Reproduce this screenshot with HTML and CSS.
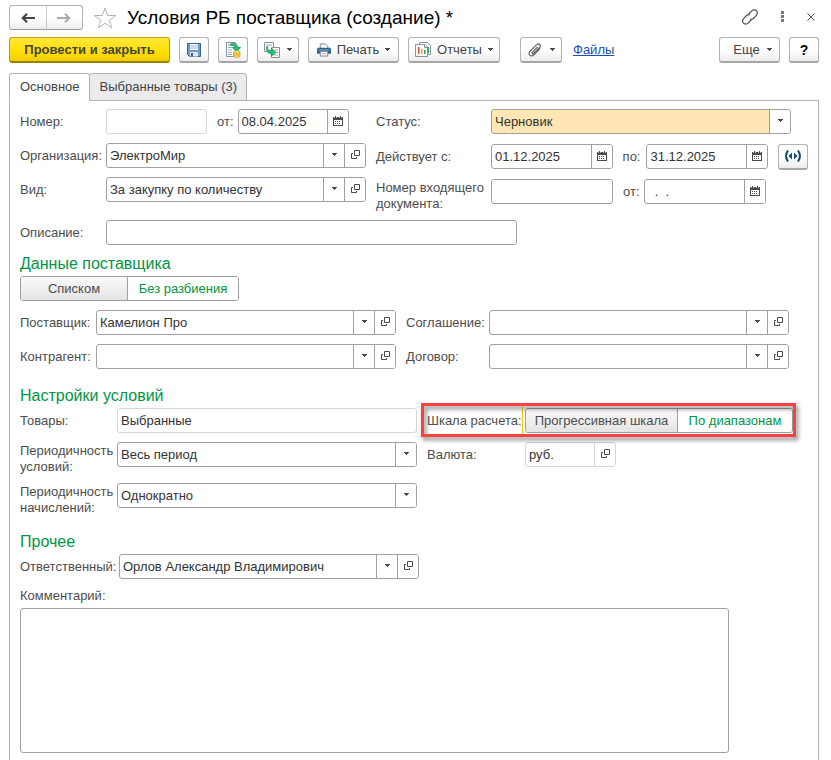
FILE: index.html
```html
<!DOCTYPE html>
<html lang="ru">
<head>
<meta charset="utf-8">
<title>Условия РБ поставщика (создание) *</title>
<link rel="stylesheet" href="styles.css">
</head>
<body>
<svg class="defs" aria-hidden="true">
  <symbol id="cal" viewBox="0 0 10 10"><path d="M0 1h10v9H0z" fill="#4a4a4a"/><path d="M1 4h8v5H1z" fill="#fff"/><path d="M2 0h1v2H2zM7 0h1v2H7z" fill="#4a4a4a"/><path d="M1 1h1v1H1zM3 1h1v1H3zM6 1h1v1H6zM8 1h1v1H8z" fill="#bbb"/><path d="M2 5h1v1H2zM4 5h1v1H4zM6 5h1v1H6zM2 7h1v1H2zM4 7h1v1H4zM6 7h1v1H6z" fill="#4a4a4a"/></symbol>
  <symbol id="open" viewBox="0 0 9 9"><path d="M3.500 .5h5v5h-5zM2 3.500H.5v5h5V7" fill="none" stroke="#4a4a4a"/></symbol>
  <symbol id="arr" viewBox="0 0 5 3"><path d="M0 0h5v1H4v1H3v1H2V2H1V1H0z" fill="#4a4a4a"/></symbol>
</svg>

<header class="titlebar">
  <div class="nav">
    <button type="button" aria-label="Назад"><svg width="14" height="10" viewBox="0 0 14 10"><path d="M14 5H2M6 .8L1.800 5 6 9.200" fill="none" stroke="#444" stroke-width="2.200"/></svg></button>
    <button type="button" aria-label="Вперед"><svg width="14" height="10" viewBox="0 0 14 10"><path d="M0 5h12M8 .8L12.200 5 8 9.200" fill="none" stroke="#aaa" stroke-width="2"/></svg></button>
  </div>
  <button type="button" class="plain star" aria-label="В избранное"><svg width="24" height="22" viewBox="0 0 24 22"><path d="M12 1l2.700 7.500h8l-6.400 4.800 2.400 7.600L12 16.300l-6.700 4.600 2.400-7.600L1.300 8.500h8z" fill="#fff" stroke="#b0b5ba"/></svg></button>
  <h1>Условия РБ поставщика (создание) *</h1>
  <div class="window-tools">
    <button type="button" class="plain" aria-label="Ссылка"><svg width="16" height="16" viewBox="0 0 16 16"><g fill="none" stroke="#555" stroke-width="1.200"><path d="M6.500 5.500l3.300-3.700a3.200 3.200 0 0 1 4.600 4.500l-3 3.200c-1 1-2.300 1-3.200.4"/><path d="M9.500 10.500l-3.300 3.700a3.200 3.200 0 0 1-4.600-4.500l3-3.200c1-1 2.300-1 3.200-.4"/></g></svg></button>
    <button type="button" class="plain" aria-label="Меню"><svg width="3" height="11" viewBox="0 0 3 11"><path d="M0 0h3v3H0zM0 4h3v3H0zM0 8h3v3H0z" fill="#777"/></svg></button>
    <button type="button" class="plain" aria-label="Закрыть"><svg width="8" height="8" viewBox="0 0 8 8"><path d="M.5.500l7 7M7.500.500l-7 7" stroke="#555"/></svg></button>
  </div>
</header>

<div class="toolbar">
  <button type="button" class="btn primary">Провести и закрыть</button>
  <button type="button" class="btn square" aria-label="Записать"><svg width="14" height="14" viewBox="0 0 14 14"><path d="M.5.500h13v13h-11l-2-2z" fill="#6f9bcb" stroke="#3b618c"/><path d="M3 1h8v6H3z" fill="#fff"/><path d="M3 3h8M3 5h8" stroke="#9fb6cf"/><path d="M3 9h8v4.500H3z" fill="#dce6f0"/><path d="M4 10h2v3.500H4z" fill="#3b618c"/></svg></button>
  <button type="button" class="btn square" aria-label="Провести"><svg width="16" height="16" viewBox="0 0 16 16"><path d="M1.500.500h9v14h-9z" fill="#fff" stroke="#8494a5"/><path d="M3 3h3M3 5.500h4M3 8h4M3 10.500h4M3 12.500h4" stroke="#9aa8b5"/><path d="M5.500 2c4-1.500 7 .3 7.500 3.500h2.500L11.500 10l-4-4.500h2.300C9.300 3.800 8 3 5.500 3.400z" fill="#25c16c" stroke="#149150" stroke-width=".8"/><path d="M8.500 10v4c0 2 6.500 2 6.500 0v-4" fill="#f5d552" stroke="#c9a01f" stroke-width=".7"/><ellipse cx="11.750" cy="10" rx="3.250" ry="1.200" fill="#ffe98a" stroke="#c9a01f" stroke-width=".7"/><path d="M8.500 12c0 1.500 6.500 1.500 6.500 0" fill="none" stroke="#c9a01f" stroke-width=".7"/></svg></button>
  <button type="button" class="btn drop create" aria-label="Создать на основании"><svg width="17" height="16" viewBox="0 0 17 16"><path d="M.5.500h9v9h-9z" fill="#fff" stroke="#8494a5"/><path d="M2 3h6M2 5h3" stroke="#9aa8b5"/><path d="M7.500 5.500h8v10h-8z" fill="#fff" stroke="#8494a5"/><path d="M11 8h3M12 10.500h2M10 13h4" stroke="#9aa8b5"/><path d="M3 4.500c0 3 1.500 4 4.500 4V6l4.500 4.500L7.500 14v-2.500C3.500 11.500 2 9 3 4.500z" fill="#25c16c" stroke="#149150" stroke-width=".8"/></svg><svg class="arr"><use href="#arr"/></svg></button>
  <button type="button" class="btn drop print"><svg width="14" height="14" viewBox="0 0 15 14"><path d="M3.500 5V.500h5.500l2.500 2.500v2" fill="#fff" stroke="#6d8296"/><path d="M1 4.500h13l1 1.500v5H0V6z" fill="#2f5e88"/><path d="M1.500 7h12" stroke="#9fb9d0"/><path d="M3.500 8.500h8v5h-8z" fill="#fff" stroke="#6d8296"/><path d="M5 11h5" stroke="#9aa8b5"/></svg><span>Печать</span><svg class="arr"><use href="#arr"/></svg></button>
  <button type="button" class="btn drop reports"><svg width="16" height="16" viewBox="0 0 16 16"><path d="M4.500 3V.500h8l3 3v9h-3" fill="#fff" stroke="#8494a5"/><path d="M13.500 5v6" stroke="#2fa45f"/><path d="M.5 2.500h9.500l2.500 2.500v9.500H.5z" fill="#fff" stroke="#8494a5"/><path d="M9.500 2.500v3h3" fill="none" stroke="#8494a5"/><path d="M3 5h1.500v7H3z" fill="#e6472e"/><path d="M6 7h1.500v5H6z" fill="#f0a62a"/><path d="M9 8h1.500v4H9z" fill="#28a35a"/></svg><span>Отчеты</span><svg class="arr"><use href="#arr"/></svg></button>
  <button type="button" class="btn drop clip" aria-label="Присоединенные файлы"><svg width="14" height="14" viewBox="0 0 14 14"><path d="M9.500 4L4.300 9.300c-.8 1 .4 2 1.300 1.200l6-6c2-2.200-.8-4.800-2.900-2.900L2.300 8C-.7 11.200 2.700 14.600 5.900 11.800L12 5.500" fill="none" stroke="#666" stroke-width="1.200"/></svg><svg class="arr"><use href="#arr"/></svg></button>
  <a class="files" href="#files">Файлы</a>
  <button type="button" class="btn drop more"><span>Еще</span><svg class="arr"><use href="#arr"/></svg></button>
  <button type="button" class="btn square help" aria-label="Справка">?</button>
</div>

<nav class="tabs">
  <a class="tab active" href="#main">Основное</a>
  <a class="tab" href="#goods">Выбранные товары (3)</a>
</nav>

<main class="panel" id="main">
  <div class="columns general">
    <div class="column">
      <div class="row"><label for="num">Номер:</label><div class="field short muted"><input id="num" readonly></div><label class="inline" for="date">от:</label><div class="field date1"><input id="date" value="08.04.2025"><button type="button" aria-label="Календарь"><svg class="cal"><use href="#cal"/></svg></button></div></div>
      <div class="row"><label for="org">Организация:</label><div class="field grow combo"><select id="org"><option>ЭлектроМир</option></select><span class="cell"><svg class="arr"><use href="#arr"/></svg></span><button type="button" aria-label="Открыть"><svg class="open"><use href="#open"/></svg></button></div></div>
      <div class="row"><label for="kind">Вид:</label><div class="field grow combo"><select id="kind"><option>За закупку по количеству</option></select><span class="cell"><svg class="arr"><use href="#arr"/></svg></span><button type="button" aria-label="Открыть"><svg class="open"><use href="#open"/></svg></button></div></div>
    </div>
    <div class="column right">
      <div class="row"><label for="status">Статус:</label><div class="field status combo"><select id="status"><option>Черновик</option></select><span class="cell"><svg class="arr"><use href="#arr"/></svg></span></div></div>
      <div class="row"><label for="from">Действует с:</label><div class="field date"><input id="from" value="01.12.2025"><button type="button" aria-label="Календарь"><svg class="cal"><use href="#cal"/></svg></button></div><label class="inline until" for="to">по:</label><div class="field date"><input id="to" value="31.12.2025"><button type="button" aria-label="Календарь"><svg class="cal"><use href="#cal"/></svg></button></div><button type="button" class="btn square period" aria-label="Выбрать период"><svg width="16" height="12" viewBox="0 0 16 12"><path d="M3 .5C.5 4 .5 8 3 11.500M13 .5c2.500 3.500 2.500 7.500 0 11" fill="none" stroke="#164a6e" stroke-width="2"/><path d="M7 2.500v7L3.500 6zM9 2.500v7L12.500 6z" fill="#164a6e"/></svg></button></div>
      <div class="row tall"><label for="innum">Номер входящего документа:</label><div class="field date"><input id="innum"></div><label class="inline" for="indate">от:</label><div class="field date"><input id="indate" value="&nbsp; .&nbsp; ."><button type="button" aria-label="Календарь"><svg class="cal"><use href="#cal"/></svg></button></div></div>
    </div>
  </div>
  <div class="row general-row"><label for="desc">Описание:</label><div class="field desc"><input id="desc"></div></div>

  <h2>Данные поставщика</h2>
  <div class="segment view"><button type="button">Списком</button><button type="button" class="on">Без разбиения</button></div>
  <div class="columns supplier">
    <div class="column">
      <div class="row"><label for="sup">Поставщик:</label><div class="field grow combo"><select id="sup"><option>Камелион Про</option></select><span class="cell"><svg class="arr"><use href="#arr"/></svg></span><button type="button" aria-label="Открыть"><svg class="open"><use href="#open"/></svg></button></div></div>
      <div class="row"><label for="contr">Контрагент:</label><div class="field grow combo"><select id="contr"><option></option></select><span class="cell"><svg class="arr"><use href="#arr"/></svg></span><button type="button" aria-label="Открыть"><svg class="open"><use href="#open"/></svg></button></div></div>
    </div>
    <div class="column right">
      <div class="row"><label for="agr">Соглашение:</label><div class="field grow combo"><select id="agr"><option></option></select><span class="cell"><svg class="arr"><use href="#arr"/></svg></span><button type="button" aria-label="Открыть"><svg class="open"><use href="#open"/></svg></button></div></div>
      <div class="row"><label for="dog">Договор:</label><div class="field grow combo"><select id="dog"><option></option></select><span class="cell"><svg class="arr"><use href="#arr"/></svg></span><button type="button" aria-label="Открыть"><svg class="open"><use href="#open"/></svg></button></div></div>
    </div>
  </div>

  <h2>Настройки условий</h2>
  <div class="columns terms">
    <div class="column">
      <div class="row"><label for="goods">Товары:</label><div class="field grow muted"><input id="goods" value="Выбранные" readonly></div></div>
      <div class="row tall"><label for="per1">Периодичность условий:</label><div class="field grow combo"><select id="per1"><option>Весь период</option></select><span class="cell"><svg class="arr"><use href="#arr"/></svg></span></div></div>
      <div class="row tall"><label for="per2">Периодичность начислений:</label><div class="field grow combo"><select id="per2"><option>Однократно</option></select><span class="cell"><svg class="arr"><use href="#arr"/></svg></span></div></div>
    </div>
    <div class="column right">
      <div class="row marked"><span class="label" id="scale">Шкала расчета:</span><div class="segment scale" role="group" aria-labelledby="scale"><button type="button">Прогрессивная шкала</button><button type="button" class="on">По диапазонам</button></div><span class="mark"></span></div>
      <div class="row"><label for="cur">Валюта:</label><div class="field currency muted"><input id="cur" value="руб." readonly><button type="button" aria-label="Открыть"><svg class="open"><use href="#open"/></svg></button></div></div>
    </div>
  </div>

  <h2>Прочее</h2>
  <div class="row other"><label for="resp">Ответственный:</label><div class="field person combo"><select id="resp"><option>Орлов Александр Владимирович</option></select><span class="cell"><svg class="arr"><use href="#arr"/></svg></span><button type="button" aria-label="Открыть"><svg class="open"><use href="#open"/></svg></button></div></div>
  <label class="comment-label" for="comment">Комментарий:</label>
  <textarea id="comment"></textarea>
</main>
</body>
</html>
```
FILE: styles.css
```css
* { box-sizing: border-box; }
body {
  margin: 0;
  padding: 5px 12px 0 9px;
  min-height: 100vh;
  display: flex;
  flex-direction: column;
  background: #fff;
  color: #4d4d4d;
  font: 13px/16px "Liberation Sans", Arial, sans-serif;
}
button, input, select, textarea { font: inherit; color: inherit; margin: 0; }
button { padding: 0; cursor: pointer; }
svg { display: block; flex: none; }
.defs { position: absolute; width: 0; height: 0; }
.arr { width: 5px; height: 3px; }
.cal { width: 10px; height: 10px; }
.open { width: 9px; height: 9px; }

.titlebar { display: flex; align-items: center; height: 25px; }
.nav {
  display: flex;
  width: 74px;
  height: 25px;
  border: 1px solid #b3b3b3;
  border-bottom-color: #999;
  border-radius: 3px;
  background: linear-gradient(#fff 50%, #eee);
}
.nav button { flex: 1; display: grid; place-items: center; border: 0; background: none; }
.nav button + button { border-left: 1px solid #ccc; }
.plain { border: 0; background: none; }
.star { margin: 0 10px; }
h1 { margin: 0; font-size: 19px; line-height: 24px; font-weight: 400; color: #000; white-space: nowrap; }
.window-tools { display: flex; align-items: center; gap: 23px; margin-left: auto; padding: 0 4px 2px 0; }

.toolbar { display: flex; align-items: center; gap: 9px; margin-top: 7px; }
.btn {
  display: flex;
  align-items: center;
  justify-content: center;
  height: 26px;
  border: 1px solid #b3b3b3;
  border-bottom: 2px solid #a6a6a6;
  border-radius: 3px;
  background: linear-gradient(#fff 50%, #ededed);
  color: #444;
  white-space: nowrap;
}
.btn.primary {
  width: 161px;
  border-color: #c3a200 #b89900 #9c8200;
  background: linear-gradient(#ffe83c, #ffde00 60%, #f0cf00);
  font-weight: 700;
}
.btn.square { width: 30px; }
.btn.drop { gap: 6px; }
.btn.create, .btn.clip { width: 42px; }
.btn.print { width: 91px; }
.btn.reports { width: 92px; }
.btn.clip { margin-left: 11px; gap: 8px; }
.btn.more { margin-left: auto; width: 61px; padding-left: 6px; gap: 7px; }
.btn.help { color: #000; font-size: 14px; font-weight: 700; }
.files { margin-left: 2px; color: #1a4fb4; }

.tabs { display: flex; margin-top: 10px; height: 28px; position: relative; z-index: 1; }
.tab {
  padding: 5px 9px 5px 10px;
  border: 1px solid #b3b3b3;
  border-radius: 3px 3px 0 0;
  margin-left: -1px;
  background: #ebebeb;
  color: #444;
  text-decoration: none;
}
.tab.active { margin-left: 0; background: #fff; border-bottom-color: #fff; }

.panel { flex: 1; margin-top: -1px; border: 1px solid #b3b3b3; border-bottom: 0; padding: 8px 10px 7px; }
.columns { display: grid; gap: 10px; }
.column { display: flex; flex-direction: column; gap: 9px; min-width: 0; }
.general { grid-template-columns: 346fr 432fr; }
.general .right { gap: 10px; }
.supplier { grid-template-columns: 376fr 383fr; margin: 9px 19px 0 0; }
.terms { grid-template-columns: 397fr 381fr; }

.row { display: flex; align-items: center; height: 25px; }
.row.tall { height: 32px; align-items: flex-start; }
.row > label, .row > .label { flex: none; }
.tall > label { padding-top: 1px; }
.general label, .general-row label { width: 86px; }
.general .right label { width: 115px; }
.supplier label { width: 76px; }
.supplier .right label { width: 83px; }
.terms label { width: 97px; }
.terms .right label, .terms .label { width: 98px; }
.other label { width: 99px; }
.general .row .inline, .general .right .row .inline { width: auto; margin: 0 4px 0 10px; }
.general .right .row .until { margin-right: 6px; }
.tall .inline { line-height: 24px; }

.field {
  display: flex;
  height: 25px;
  border: 1px solid #a0a0a0;
  border-radius: 3px;
  background: #fff;
  color: #333;
  overflow: hidden;
}
.field input, .field select {
  flex: 1;
  width: 100%;
  min-width: 0;
  border: 0;
  padding: 0 3px;
  background: none;
  appearance: none;
  outline: 0;
}
.field button, .cell {
  flex: none;
  width: 21px;
  display: grid;
  place-items: center;
  padding-bottom: 2px;
  border: 0;
  border-left: 1px solid #a0a0a0;
  background: #fff;
}
.combo { display: grid; grid-template-columns: 1fr 21px auto; }
.combo select { grid-area: 1 / 1 / 2 / 3; }
.cell { grid-area: 1 / 2; pointer-events: none; }
.field.muted, .muted button { border-color: #d6d6d6; }
.grow { flex: 1; min-width: 0; }
.short { width: 101px; }
.date1 { width: 111px; }
.date { width: 122px; }
.status { width: 300px; background: #ffe6b3; }
.desc { width: 411px; }
.currency { width: 91px; }
.person { width: 300px; }
.period { margin-left: 10px; }
.general-row { margin-top: 9px; }

h2 { margin: 8px 0 1px; font-size: 16px; line-height: 22px; font-weight: 400; color: #009646; }
.columns + h2 { margin-top: 16px; }

.segment {
  display: inline-flex;
  height: 25px;
  border: 1px solid #a0a0a0;
  border-radius: 3px;
  overflow: hidden;
  vertical-align: top;
}
.segment button { border: 0; background: linear-gradient(#fafafa, #e4e4e4); }
.segment .on { border-left: 1px solid #a0a0a0; background: #fff; color: #009646; }
.view { display: flex; width: 219px; }
.view button { flex: 1 1 106px; }
.view .on { flex-basis: 111px; }
.scale button { width: 151px; }
.scale .on { width: 115px; }

.marked { position: relative; width: 366px; }
.marked .label { height: 28px; line-height: 28px; width: 96px; margin-right: 2px; border-right: 1px solid #f2c200; }
.mark {
  position: absolute;
  inset: -5px -3px -4px -6px;
  border: 3px solid #fb4040;
  filter: drop-shadow(2px 3px 2px rgba(0, 0, 0, .5));
  pointer-events: none;
}

.comment-label { display: block; margin: 9px 0 4px; }
textarea {
  display: block;
  width: 90%;
  height: 145px;
  border: 1px solid #a0a0a0;
  border-radius: 3px;
  padding: 4px;
  resize: none;
}
```
